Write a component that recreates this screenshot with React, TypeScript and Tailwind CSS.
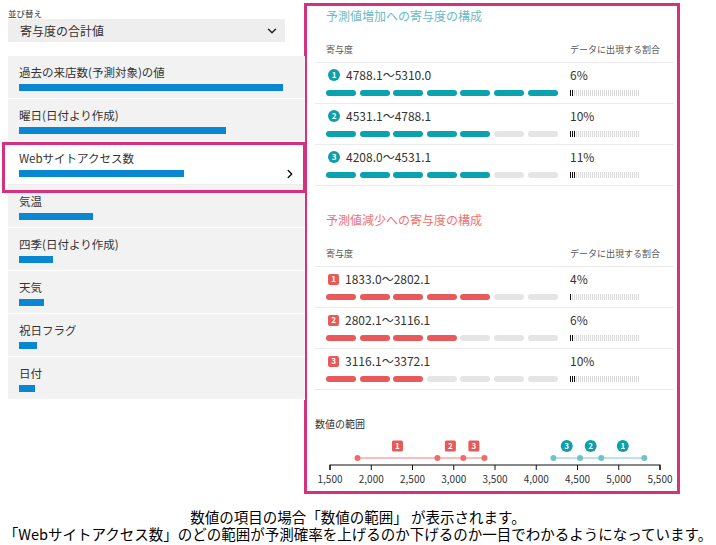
import React from 'react';
import { ChevronDown, ChevronRight } from 'lucide-react';

const FONT = { fontFamily: '"Noto Sans CJK JP", "Noto Sans", sans-serif' };

const features = [
    { label: '過去の来店数(予測対象)の値', w: 264 },
    { label: '曜日(日付より作成)', w: 207 },
    { label: 'Webサイトアクセス数', w: 165, active: true },
    { label: '気温', w: 74 },
    { label: '四季(日付より作成)', w: 34 },
    { label: '天気', w: 25 },
    { label: '祝日フラグ', w: 18 },
    { label: '日付', w: 16 },
];

const plusRows = [
    { n: 1, range: '4788.1〜5310.0', pct: 6, seg: 7, dark: 2 },
    { n: 2, range: '4531.1〜4788.1', pct: 10, seg: 5, dark: 3 },
    { n: 3, range: '4208.0〜4531.1', pct: 11, seg: 5, dark: 3 },
];

const minusRows = [
    { n: 1, range: '1833.0〜2802.1', pct: 4, seg: 5, dark: 1 },
    { n: 2, range: '2802.1〜3116.1', pct: 6, seg: 4, dark: 2 },
    { n: 3, range: '3116.1〜3372.1', pct: 10, seg: 3, dark: 3 },
];

const Badge: React.FC<{ n: number; kind: 'plus' | 'minus' }> = ({ n, kind }) =>
    kind === 'plus' ? (
        <span className="w-[12px] h-[12px] rounded-full bg-[#0e9fab] text-white text-[8px] font-bold flex items-center justify-center leading-none">
            {n}
        </span>
    ) : (
        <span className="w-[11px] h-[11px] rounded-[2px] bg-[#e85a5a] text-white text-[8px] font-bold flex items-center justify-center leading-none">
            {n}
        </span>
    );

const Ticks: React.FC<{ dark: number }> = ({ dark }) => (
    <div className="flex gap-px">
        {Array.from({ length: 35 }).map((_, i) => (
            <span key={i} className={i < dark ? 'w-px h-[6px] bg-[#111]' : 'w-px h-[6px] bg-[#d9d9d9]'} />
        ))}
    </div>
);

const RangeRow: React.FC<{ row: typeof plusRows[number]; kind: 'plus' | 'minus' }> = ({ row, kind }) => (
    <div className="border-t border-[#ebebeb] pt-[4px] pb-[7px] pl-[11px]">
        <div className="flex h-[16px] items-center">
            <div className="w-[244px] flex items-center gap-[6px]">
                <span className="ml-[2px]">
                    <Badge n={row.n} kind={kind} />
                </span>
                <span className="text-[12px] text-[#333]">{row.range}</span>
            </div>
            <span className="text-[12px] text-[#333]">{row.pct}%</span>
        </div>
        <div className="mt-[7px] flex items-center h-[6px]">
            <div className="w-[244px] flex gap-[3.6px]">
                {Array.from({ length: 7 }).map((_, i) => (
                    <span
                        key={i}
                        className={
                            i < row.seg
                                ? kind === 'plus'
                                    ? 'w-[30px] h-[6px] rounded-[3px] bg-[#0aa2ae]'
                                    : 'w-[30px] h-[6px] rounded-[3px] bg-[#e85a5a]'
                                : 'w-[30px] h-[6px] rounded-[3px] bg-[#e5e5e5]'
                        }
                    />
                ))}
            </div>
            <Ticks dark={row.dark} />
        </div>
    </div>
);

const Section: React.FC<{ title: string; kind: 'plus' | 'minus'; rows: typeof plusRows; className: string }> = ({
    title,
    kind,
    rows,
    className,
}) => (
    <div className={className}>
        <div className={kind === 'plus' ? 'pl-[11px] text-[12px] leading-[16px] text-[#6bbcc6]' : 'pl-[11px] text-[12px] leading-[16px] text-[#f27272]'}>
            {title}
        </div>
        <div className="mt-[20px] mb-[6px] pl-[11px] flex h-[12px] items-center text-[9px] text-[#555]">
            <span className="w-[244px]">寄与度</span>
            <span>データに出現する割合</span>
        </div>
        <div className="border-b border-[#ebebeb]">
            {rows.map((r) => (
                <RangeRow key={r.n} row={r} kind={kind} />
            ))}
        </div>
    </div>
);

// svg starts at x=315 on the page, axis runs 330..660
const x = (v: number) => 15 + (v - 1500) * 0.0825;

const RangeChart: React.FC = () => {
    const red = [1833, 2802.1, 3116.1, 3372.1];
    const teal = [4208, 4531.1, 4788.1, 5310];
    const ticks = [1500, 2000, 2500, 3000, 3500, 4000, 4500, 5000, 5500];
    return (
        <svg width="362" height="56" className="mt-[3px] block">
            <line x1={x(red[0])} x2={x(red[3])} y1="25" y2="25" stroke="#f7a8a8" strokeWidth="1.5" />
            <line x1={x(teal[0])} x2={x(teal[3])} y1="25" y2="25" stroke="#a8d9df" strokeWidth="1.5" />
            {red.map((v) => (
                <circle key={v} cx={x(v)} cy="25" r="3" fill="#f26b6b" />
            ))}
            {teal.map((v) => (
                <circle key={v} cx={x(v)} cy="25" r="3" fill="#6fc2ca" />
            ))}
            {[0, 1, 2].map((i) => {
                const cx = (x(red[i]) + x(red[i + 1])) / 2;
                return (
                    <g key={'r' + i}>
                        <rect x={cx - 5.5} y="7.5" width="11" height="11" rx="1.5" fill="#e85a5a" />
                        <text x={cx} y="16" textAnchor="middle" fontSize="8" fontWeight="700" fill="#fff">
                            {i + 1}
                        </text>
                    </g>
                );
            })}
            {[0, 1, 2].map((i) => {
                const cx = (x(teal[i]) + x(teal[i + 1])) / 2;
                return (
                    <g key={'t' + i}>
                        <circle cx={cx} cy="13" r="6" fill="#0e9fab" />
                        <text x={cx} y="16" textAnchor="middle" fontSize="8" fontWeight="700" fill="#fff">
                            {3 - i}
                        </text>
                    </g>
                );
            })}
            <path d={`M${x(1500)},37V32H${x(5500)}V37`} fill="none" stroke="#111" strokeWidth="1.2" />
            {ticks.map((t) => (
                <g key={t}>
                    <line x1={x(t)} x2={x(t)} y1="32" y2="37" stroke="#111" strokeWidth="1" />
                    <text x={x(t)} y="50" textAnchor="middle" fontSize="10" fill="#333">
                        {t.toLocaleString('en-US')}
                    </text>
                </g>
            ))}
        </svg>
    );
};

export default function App() {
    return (
        <div className="w-[716px] h-[545px] bg-white text-[#222] overflow-hidden" style={FONT}>
            <div className="flex items-start">
                {/* left: feature list */}
                <div className="w-[305px] pl-2 pt-[8px]">
                    <div className="text-[8.5px] leading-[10px] text-[#333]">並び替え</div>
                    <div className="mt-[1px] h-[23px] w-[277px] bg-[#eeeeee] flex items-center justify-between pl-[12px] pr-[6px]">
                        <span className="text-[12px] text-[#333]">寄与度の合計値</span>
                        <ChevronDown size={14} strokeWidth={2.5} className="text-[#222]" />
                    </div>
                    <div className="mt-[14px]">
                        {features.map((f) => (
                            <div
                                key={f.label}
                                className={
                                    f.active
                                        ? 'relative bg-white border-b border-[#eeeeee] pt-[9px] pb-[7px] pl-[11px] pr-[8px]'
                                        : 'relative bg-[#f2f2f2] border-b border-white pt-[9px] pb-[7px] pl-[11px] pr-[8px]'
                                }
                            >
                                <div className="text-[11.5px] leading-[14px] text-[#333]">{f.label}</div>
                                <div className="mt-[5px] h-[7px] flex items-center justify-between">
                                    <span className="h-[7px] bg-[#0a87d2]" style={{ width: f.w }} />
                                    {f.active && <ChevronRight size={14} strokeWidth={2.5} className="text-[#111]" />}
                                </div>
                                {f.active && (
                                    <span className="absolute -left-[6px] top-0 -right-[1px] -bottom-[9px] border-[3px] border-[#d6317f] z-10" />
                                )}
                            </div>
                        ))}
                    </div>
                </div>

                {/* right: detail panel */}
                <div className="w-[376px] h-[491px] mt-[3px] -ml-px border-[3px] border-[#d6317f] pl-[8px] pr-[3px] pt-[2px]">
                    <Section title="予測値増加への寄与度の構成" kind="plus" rows={plusRows} className="" />
                    <Section title="予測値減少への寄与度の構成" kind="minus" rows={minusRows} className="mt-[26px]" />
                    <div className="mt-[28px] text-[10px] leading-[12px] text-[#333]">数値の範囲</div>
                    <RangeChart />
                </div>
            </div>

            <div className="mt-[14px] text-center text-[14.5px] leading-[17px] text-black whitespace-nowrap">
                <div>数値の項目の場合「数値の範囲」 が表示されます。</div>
                <div>「Webサイトアクセス数」のどの範囲が予測確率を上げるのか下げるのか一目でわかるようになっています。</div>
            </div>
        </div>
    );
}
